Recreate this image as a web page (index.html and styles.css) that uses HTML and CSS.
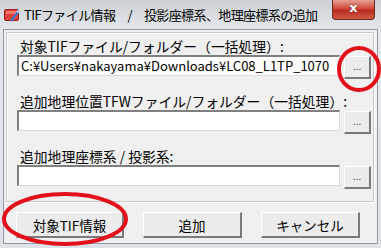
FILE: index.html
```html
<!DOCTYPE html>
<html>
<head>
    <meta charset="utf-8">
    <title>TIFファイル情報</title>
    <link rel="stylesheet" href="styles.css">
</head>
<body>
    <div class="window">
        <div class="titlebar">
            <svg class="app-icon" width="16" height="16" viewBox="0 0 16 16">
                <rect x="0.5" y="2.5" width="14" height="11" rx="1.5" fill="#e0403a" stroke="#9c1f1a"/>
                <rect x="2" y="4" width="11" height="3" fill="#f47a70"/>
                <path d="M7 14 L14 5" stroke="#3a78c8" stroke-width="2.2"/>
                <circle cx="14" cy="4.5" r="1.6" fill="#9cc6f0"/>
            </svg>
            <span class="title">TIFファイル情報</span>
            <span class="title title-sep">/</span>
            <span class="title">投影座標系、地理座標系の追加</span>
            <div class="close-btn">x</div>
        </div>

        <div class="client">
            <div class="group">
                <div class="field">
                    <label>対象TIFファイル/フォルダー（一括処理）:</label>
                    <div class="input-row">
                        <div class="textbox">C:¥Users¥nakayama¥Downloads¥LC08_L1TP_1070</div>
                        <button class="browse">...</button>
                    </div>
                </div>
                <div class="field">
                    <label>追加地理位置TFWファイル/フォルダー（一括処理）:</label>
                    <div class="input-row">
                        <div class="textbox"></div>
                        <button class="browse">...</button>
                    </div>
                </div>
                <div class="field">
                    <label>追加地理座標系 / 投影系:</label>
                    <div class="input-row">
                        <div class="textbox"></div>
                        <button class="browse">...</button>
                    </div>
                </div>
            </div>

            <div class="actions">
                <button class="btn btn-info">対象TIF情報</button>
                <button class="btn">追加</button>
                <button class="btn">キャンセル</button>
            </div>
        </div>

        <!-- red annotation marks -->
        <svg class="marks" width="381" height="248" viewBox="0 0 381 248">
            <ellipse cx="359" cy="69" rx="20" ry="21" fill="none" stroke="#e3101c" stroke-width="4"/>
            <ellipse cx="65" cy="219" rx="61" ry="25" fill="none" stroke="#e3101c" stroke-width="4"/>
        </svg>
    </div>
</body>
</html>
```

FILE: styles.css
```css
body {
    margin: 0;
    padding: 0;
    font-family: "Noto Sans CJK JP", sans-serif;
    background-color: #dfe3e8;
}

.window {
    position: relative;
    width: 381px;
    height: 248px;
    background: linear-gradient(#cdd1d6, #e4e7ea 30px, #dfe3e8);
    overflow: hidden;
    box-sizing: border-box;
    padding: 0 3px 4px 3px;
    display: flex;
    flex-direction: column;
}

.titlebar {
    height: 29px;
    display: flex;
    align-items: flex-start;
}

.app-icon {
    margin: 7px 4px 0 1px;
}

.title {
    font-size: 13px;
    letter-spacing: -0.6px;
    color: #000;
    margin-top: 5px;
    white-space: nowrap;
}

.title-sep {
    margin: 5px 12px 0 12px;
}

.close-btn {
    margin-left: auto;
    margin-right: 3px;
    width: 41px;
    height: 19px;
    border: 1px solid #6e2a24;
    border-top: none;
    border-radius: 0 0 4px 4px;
    background: linear-gradient(#e8a195, #d0483a 45%, #b92c1f 55%, #cf5a45);
    color: #fff;
    font-family: "DejaVu Sans", sans-serif;
    font-weight: bold;
    font-size: 13px;
    text-align: center;
    line-height: 16px;
    text-shadow: 0 0 2px #5a140e;
}

.client {
    flex: 1;
    background-color: #f0f0f0;
    border: 1px solid #8e9aa6;
    display: flex;
    flex-direction: column;
}

.group {
    margin: 2px 3px 0 2px;
    height: 163px;
    border: 1px solid #c8c8c8;
    box-shadow: inset 1px 1px 0 #fff, 1px 1px 0 #fff;
    padding: 5px 2px 0 10px;
    display: flex;
    flex-direction: column;
    gap: 3px;
}

.field label {
    display: block;
    font-size: 13.8px;
    line-height: 17px;
    padding-left: 3px;
    color: #000;
}

.input-row {
    display: flex;
    align-items: flex-start;
    gap: 4px;
    height: 35px;
}

.textbox {
    width: 320px;
    height: 18px;
    background-color: #fff;
    border-top: 2px solid #808080;
    border-left: 2px solid #808080;
    border-right: 1px solid #dcdcdc;
    border-bottom: 1px solid #dcdcdc;
    font-family: "Noto Sans CJK JP", sans-serif;
    font-size: 13px;
    line-height: 18px;
    padding-left: 2px;
    white-space: nowrap;
    overflow: hidden;
}

.browse {
    width: 27px;
    height: 23px;
    margin-top: 1px;
    padding: 0;
    background-color: #ececec;
    border-top: 1px solid #fff;
    border-left: 1px solid #fff;
    border-right: 2px solid #7a7a7a;
    border-bottom: 2px solid #7a7a7a;
    font-size: 10px;
    color: #333;
    font-family: "Liberation Sans", sans-serif;
    line-height: 20px;
}

.actions {
    display: flex;
    padding: 10px 16px 0 12px;
    gap: 19px;
}

.btn {
    width: 99px;
    height: 26px;
    padding: 0;
    background-color: #ececec;
    border-top: 1px solid #fff;
    border-left: 1px solid #fff;
    border-right: 2px solid #7a7a7a;
    border-bottom: 2px solid #7a7a7a;
    font-family: "Noto Sans CJK JP", sans-serif;
    font-size: 13.5px;
    color: #000;
}

.btn-info {
    width: 108px;
}

.marks {
    position: absolute;
    left: 0;
    top: 0;
    pointer-events: none;
}
```
